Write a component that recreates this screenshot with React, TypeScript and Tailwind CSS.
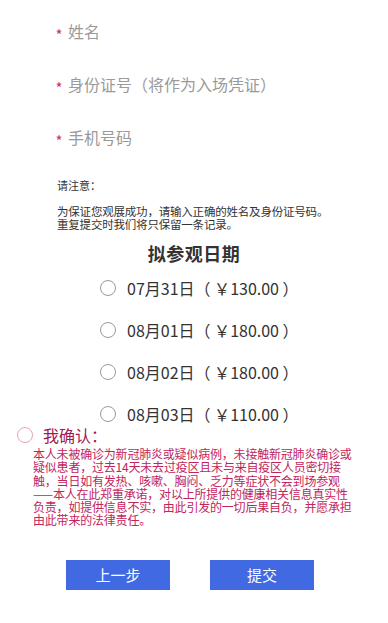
import { useState } from "react";

const fields = ["姓名", "身份证号（将作为入场凭证）", "手机号码"];

const dates = [
  { day: "07月31日", price: "130.00" },
  { day: "08月01日", price: "180.00" },
  { day: "08月02日", price: "180.00" },
  { day: "08月03日", price: "110.00" },
];

const pledge = [
  "本人未被确诊为新冠肺炎或疑似病例，未接触新冠肺炎确诊或",
  "疑似患者，过去14天未去过疫区且未与来自疫区人员密切接",
  "触，当日如有发热、咳嗽、胸闷、乏力等症状不会到场参观",
  "——本人在此郑重承诺，对以上所提供的健康相关信息真实性",
  "负责，如提供信息不实，由此引发的一切后果自负，并愿承担",
  "由此带来的法律责任。",
];

export default function App() {
  const [picked, setPicked] = useState<number | null>(null);
  const [agreed, setAgreed] = useState(false);

  return (
    <div
      className="w-[388px] h-[623px] bg-white overflow-hidden pt-[4px]"
      style={{ fontFamily: '"Noto Sans CJK SC", "Liberation Sans", sans-serif' }}
    >
      {fields.map((f) => (
        <div key={f} className="h-[53px] flex items-center pl-[52px]">
          <span className="w-[14px] text-[15px] text-[#c8346a] text-center leading-none translate-y-[4px]">*</span>
          <input
            placeholder={f}
            className="flex-1 ml-[2px] bg-transparent outline-none text-[16px] text-[#333] placeholder-[#9a9a9a] mr-[20px]"
          />
        </div>
      ))}

      <div className="pl-[57px] mt-[14px] text-[11px] leading-[16px] text-[#333]">请注意：</div>
      <div className="pl-[57px] mt-[12px] text-[11.5px] leading-[13px] text-[#333] tracking-[-0.2px]">
        <div>为保证您观展成功，请输入正确的姓名及身份证号码。</div>
        <div>重复提交时我们将只保留一条记录。</div>
      </div>

      <div className="mt-[10px] text-center text-[18px] leading-[24px] font-semibold text-[#333] tracking-[0.5px]">
        拟参观日期
      </div>

      <div className="mt-[12px] flex flex-col gap-[20px]">
        {dates.map((d, i) => (
          <button
            key={d.day}
            onClick={() => setPicked(i)}
            className="h-[22px] flex items-center pl-[100px] gap-[11px] text-left"
          >
            <span className="w-[16px] h-[16px] rounded-full border border-[#9a9a9a] flex items-center justify-center">
              {picked === i && <span className="w-[8px] h-[8px] rounded-full bg-[#4169e1]" />}
            </span>
            <span className="text-[16px] text-[#333] leading-none">
              {d.day}（ ￥{d.price} ）
            </span>
          </button>
        ))}
      </div>

      <button
        onClick={() => setAgreed(!agreed)}
        className="h-[20px] flex items-center pl-[17px] gap-[10px]"
      >
        <span className="w-[16px] h-[16px] rounded-full border border-[#e6a3b8] flex items-center justify-center">
          {agreed && <span className="w-[8px] h-[8px] rounded-full bg-[#b01e55]" />}
        </span>
        <span className="text-[16px] text-[#a3194f] leading-none">我确认：</span>
      </button>
      <div className="pl-[33px] mt-[2px] text-[12px] leading-[13.3px] text-[#c2245c] whitespace-nowrap tracking-[-0.2px]">
        {pledge.map((l) => (
          <div key={l}>{l}</div>
        ))}
      </div>

      <div className="mt-[33px] flex pl-[66px] gap-[40px]">
        <button className="w-[104px] h-[30px] bg-[#4169e1] text-white text-[15px]">上一步</button>
        <button className="w-[104px] h-[30px] bg-[#4169e1] text-white text-[15px]">提交</button>
      </div>
    </div>
  );
}
